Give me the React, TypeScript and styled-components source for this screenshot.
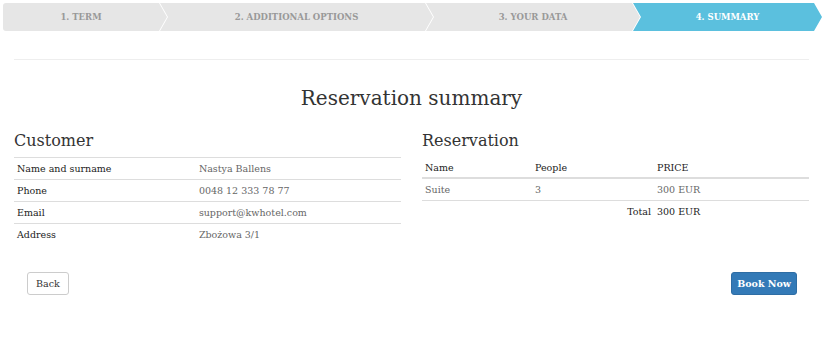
import React from 'react';
import styled, { createGlobalStyle } from 'styled-components';

const GlobalStyle = createGlobalStyle`
  *, *::before, *::after { box-sizing: border-box; }
  body {
    margin: 0;
    background: #fff;
    font-family: 'DejaVu Serif', 'Liberation Serif', serif;
    color: #333;
  }
`;

const steps = [
  { label: '1. TERM', width: 164 },
  { label: '2. ADDITIONAL OPTIONS', width: 273 },
  { label: '3. YOUR DATA', width: 214 },
  { label: '4. SUMMARY', width: 189, active: true },
];

const customer = [
  ['Name and surname', 'Nastya Ballens'],
  ['Phone', '0048 12 333 78 77'],
  ['Email', 'support@kwhotel.com'],
  ['Address', 'Zbożowa 3/1'],
];

const Page = styled.div`
  padding: 3px 6px 0 3px;
`;

const Stepper = styled.div`
  display: flex;
  height: 28px;
`;

const Step = styled.div<{ $w: number; $active?: boolean; $first?: boolean }>`
  flex: 0 0 ${p => p.$w}px;
  margin-left: ${p => (p.$first ? 0 : -7)}px;
  display: flex;
  align-items: center;
  justify-content: center;
  padding-left: ${p => (p.$first ? 0 : 8)}px;
  padding-right: 8px;
  background: ${p => (p.$active ? '#5bc0de' : '#e6e6e6')};
  color: ${p => (p.$active ? '#fff' : '#999')};
  font-size: 8.5px;
  font-weight: bold;
  border-radius: ${p => (p.$first ? '3px 0 0 3px' : '0')};
  clip-path: ${p =>
    p.$first
      ? 'polygon(0 0, calc(100% - 8px) 0, 100% 50%, calc(100% - 8px) 100%, 0 100%)'
      : 'polygon(0 0, calc(100% - 8px) 0, 100% 50%, calc(100% - 8px) 100%, 0 100%, 8px 50%)'};
`;

const Content = styled.div`
  padding: 0 13px 0 11px;
`;

const Rule = styled.hr`
  border: 0;
  border-top: 1px solid #eee;
  margin: 28px 0 0;
`;

const Title = styled.h1`
  margin: 26px 0 0;
  text-align: center;
  font-size: 20px;
  font-weight: normal;
  color: #333;
`;

const Columns = styled.div`
  display: grid;
  grid-template-columns: 1fr 1fr;
  column-gap: 21px;
  margin-top: 21px;
`;

const Heading = styled.h2`
  margin: 0 0 6px;
  font-size: 16px;
  font-weight: normal;
  color: #333;
  line-height: 20px;
`;

const Table = styled.table`
  width: 100%;
  table-layout: fixed;
  border-collapse: collapse;
  font-size: 9.5px;
`;

const Cell = styled.td<{ $label?: boolean; $right?: boolean; $border?: boolean }>`
  padding: 0 3px;
  height: 22px;
  text-align: ${p => (p.$right ? 'right' : 'left')};
  border-top: ${p => (p.$border ? '1px solid #ddd' : '0')};
  color: ${p => (p.$label ? '#222' : '#666')};
`;

const HeadCell = styled.th<{ $w?: string }>`
  padding: 0 3px;
  height: 21px;
  width: ${p => p.$w || 'auto'};
  text-align: left;
  font-weight: normal;
  color: #222;
  border-bottom: 2px solid #ddd;
`;

const LabelCol = styled.col`
  width: 47%;
`;

const Actions = styled.div`
  display: flex;
  justify-content: space-between;
  padding: 0 25px 0 24px;
  margin-top: 26px;
`;

const Button = styled.button<{ $primary?: boolean }>`
  height: 23px;
  padding: 0 ${p => (p.$primary ? 5 : 8)}px;
  border-radius: 3px;
  font-family: inherit;
  font-size: 9.5px;
  font-weight: ${p => (p.$primary ? 'bold' : 'normal')};
  border: 1px solid ${p => (p.$primary ? '#2e6da4' : '#ccc')};
  background: ${p => (p.$primary ? '#337ab7' : '#fff')};
  color: ${p => (p.$primary ? '#fff' : '#333')};
  cursor: pointer;
`;

export default function App() {
  return (
    <Page>
      <GlobalStyle />
      <Stepper>
        {steps.map((s, i) => (
          <Step key={s.label} $w={s.width} $first={i === 0} $active={s.active}>
            {s.label}
          </Step>
        ))}
      </Stepper>
      <Content>
        <Rule />
        <Title>Reservation summary</Title>
        <Columns>
          <div>
            <Heading>Customer</Heading>
            <Table>
              <colgroup>
                <LabelCol />
                <col />
              </colgroup>
              <tbody>
                {customer.map(([k, v]) => (
                  <tr key={k}>
                    <Cell $label $border>{k}</Cell>
                    <Cell $border>{v}</Cell>
                  </tr>
                ))}
              </tbody>
            </Table>
          </div>
          <div>
            <Heading>Reservation</Heading>
            <Table>
              <thead>
                <tr>
                  <HeadCell $w="110px">Name</HeadCell>
                  <HeadCell $w="122px">People</HeadCell>
                  <HeadCell>PRICE</HeadCell>
                </tr>
              </thead>
              <tbody>
                <tr>
                  <Cell>Suite</Cell>
                  <Cell>3</Cell>
                  <Cell>300 EUR</Cell>
                </tr>
                <tr>
                  <Cell $border />
                  <Cell $border $label $right>Total</Cell>
                  <Cell $border $label>300 EUR</Cell>
                </tr>
              </tbody>
            </Table>
          </div>
        </Columns>
      </Content>
      <Actions>
        <Button>Back</Button>
        <Button $primary>Book Now</Button>
      </Actions>
    </Page>
  );
}
